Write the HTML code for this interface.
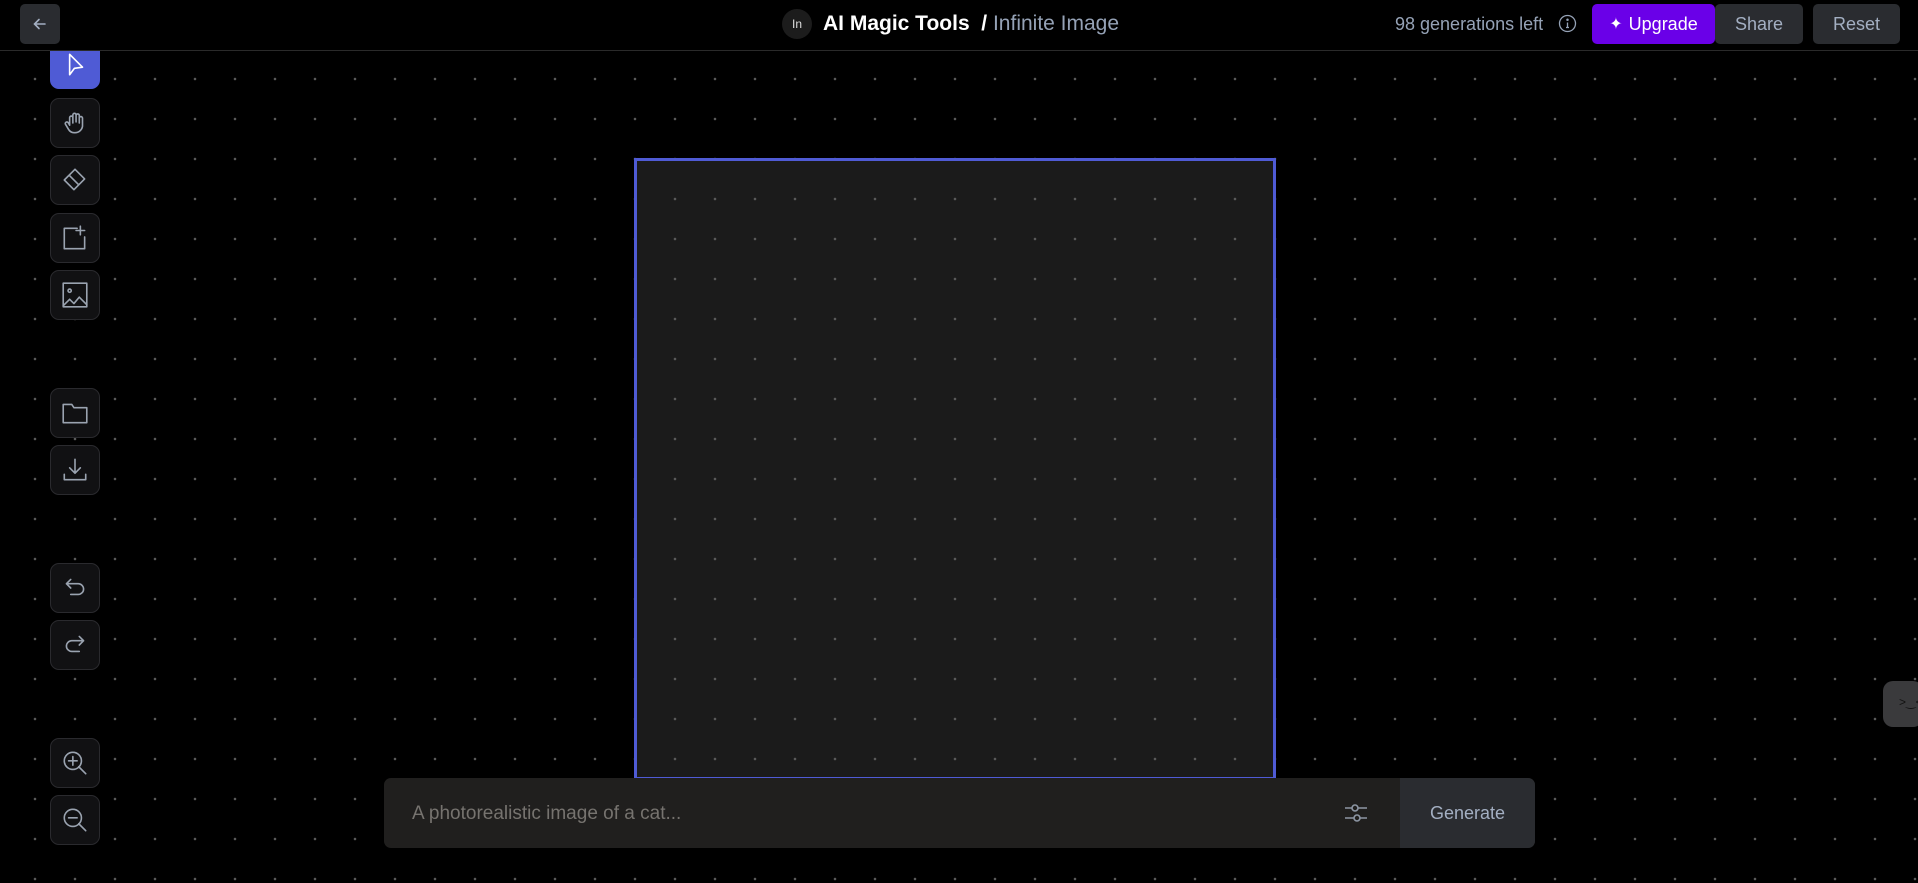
<!DOCTYPE html>
<html><head><meta charset="utf-8"><style>
*{margin:0;padding:0;box-sizing:border-box}
body{width:1918px;height:883px;overflow:hidden;background:#000;font-family:"Liberation Sans",sans-serif;position:relative}
.dots{position:absolute;left:0;top:0;width:1918px;height:883px;background-image:radial-gradient(circle,#5a5a5a 1.1px,transparent 1.5px);background-size:40px 40px;background-position:15px 59px}
.hdr{position:absolute;left:0;top:0;width:1918px;height:51px;background:#000;border-bottom:1px solid #2a2a2a}
.btn{position:absolute;border-radius:5px;background:#2a2c30;color:#a3afc2;font-size:18px;display:flex;align-items:center;justify-content:center}
.tb{position:absolute;left:50px;width:50px;height:50px;border-radius:9px;background:#111113;border:1px solid #2a2a2e;display:flex;align-items:center;justify-content:center}
.tb svg{width:30px;height:30px;fill:none;stroke:#9aa3b0;stroke-width:1.5;stroke-linecap:round;stroke-linejoin:round}
</style></head><body>
<div class="dots"></div>
<div style="position:absolute;left:634px;top:158px;width:642px;height:622px;border:3px solid #4f5bd5;background:#1b1b1b"></div>
<div class="dots" style="left:637px;top:161px;width:636px;height:617px;background-position:-622px -102px"></div>
<div class="hdr"></div>
<div class="btn" style="left:20px;top:4px;width:40px;height:40px"><svg width="18" height="18" viewBox="0 0 18 18" fill="none" stroke="#a3afc2" stroke-width="1.6" stroke-linecap="round"><path d="M14 9H4M8 4.5L3.5 9 8 13.5"/></svg></div>
<div style="position:absolute;left:782px;top:9px;width:30px;height:30px;border-radius:50%;background:#1c1c1c;color:#ddd;font-size:12px;display:flex;align-items:center;justify-content:center">In</div>
<div style="position:absolute;left:823px;top:12px;font-size:21px;font-weight:bold;color:#fff;white-space:nowrap">AI Magic Tools&nbsp; / <span style="font-weight:normal;color:#95a2b6">Infinite Image</span></div>
<div style="position:absolute;left:1395px;top:14px;font-size:18px;color:#95a2b6;white-space:nowrap">98 generations left</div>
<svg style="position:absolute;left:1558px;top:14px" width="19" height="19" viewBox="0 0 19 19" fill="none" stroke="#95a2b6" stroke-width="1.3"><circle cx="9.5" cy="9.5" r="8"/><path d="M9.5 8.5v5M8 13.5h3"/><circle cx="9.5" cy="5.8" r=".6" fill="#95a2b6"/></svg>
<div class="btn" style="left:1592px;top:4px;width:123px;height:40px;background:#6a00e8;color:#fff"><span style="font-size:16px;margin-right:6px">✦</span>Upgrade</div>
<div class="btn" style="left:1715px;top:4px;width:88px;height:40px">Share</div>
<div class="btn" style="left:1813px;top:4px;width:87px;height:40px">Reset</div>
<div class="tb" style="top:51px;height:38px;background:#4f5bd5;border-color:#4f5bd5;border-radius:0 0 9px 9px;align-items:flex-start"><svg viewBox="0 0 28 28" style="stroke:#fff;margin-top:-3px"><path d="M9 5L9 24 13.5 18 21 17Z"/></svg></div>
<div class="tb" style="top:98px"><svg viewBox="0 0 28 28"><path d="M9 16V9a1.5 1.5 0 013 0v5M12 13V6.5a1.5 1.5 0 013 0V13M15 13V7a1.5 1.5 0 013 0v7M18 13V9.5a1.5 1.5 0 013 0V17a7 7 0 01-7 6h-1a6 6 0 01-5-3l-3-5a1.5 1.5 0 012.5-1.5L9 16"/></svg></div>
<div class="tb" style="top:155px"><svg viewBox="0 0 28 28"><path d="M14 4L23 13 13 23 4 14Z M8.5 9.5L17.5 18.5"/></svg></div>
<div class="tb" style="top:213px"><svg viewBox="0 0 28 28"><path d="M16 5H4V24H23V13M19 3V11M15 7H23"/></svg></div>
<div class="tb" style="top:270px"><svg viewBox="0 0 28 28"><rect x="3" y="3" width="22" height="22"/><circle cx="9" cy="10" r="1.5"/><path d="M3 24l6-6 4 4 5-6 7 7"/></svg></div>
<div class="tb" style="top:388px"><svg viewBox="0 0 28 28"><path d="M3 6H11L13 9H25V23H3Z"/></svg></div>
<div class="tb" style="top:445px"><svg viewBox="0 0 28 28"><path d="M14 4V17M9 12L14 17 19 12M4 18V23H24V18"/></svg></div>
<div class="tb" style="top:563px"><svg viewBox="0 0 28 28"><path d="M10 6L6 10 10 14M6 10H17a5 5 0 010 10H10"/></svg></div>
<div class="tb" style="top:620px"><svg viewBox="0 0 28 28"><path d="M18 6L22 10 18 14M22 10H11a5 5 0 000 10H18"/></svg></div>
<div class="tb" style="top:738px"><svg viewBox="0 0 28 28"><circle cx="12" cy="12" r="8"/><path d="M17.5 17.5L24 24M12 8V16M8 12H16"/></svg></div>
<div class="tb" style="top:795px"><svg viewBox="0 0 28 28"><circle cx="12" cy="12" r="8"/><path d="M17.5 17.5L24 24M8 12H16"/></svg></div>
<div style="position:absolute;left:384px;top:778px;width:1151px;height:70px;border-radius:7px;background:#201f1e;overflow:hidden">
<div style="position:absolute;left:28px;top:25px;font-size:19px;color:#76736f">A photorealistic image of a cat...</div>
<svg style="position:absolute;left:958px;top:21px" width="28" height="28" viewBox="0 0 28 28" fill="none" stroke="#8d96a4" stroke-width="1.6"><path d="M3 9H10M16 9H25M3 19H12M18 19H25"/><circle cx="13" cy="9" r="3"/><circle cx="15" cy="19" r="3"/></svg>
<div style="position:absolute;left:1016px;top:0;width:135px;height:70px;background:#2a2c30;color:#a3afc2;font-size:18px;display:flex;align-items:center;justify-content:center">Generate</div>
</div>
<div style="position:absolute;left:1883px;top:681px;width:40px;height:46px;border-radius:10px;background:#3a3a3c;color:#111;font-size:12px;padding:14px 0 0 16px">&gt;‿&lt;</div>
</body></html>
